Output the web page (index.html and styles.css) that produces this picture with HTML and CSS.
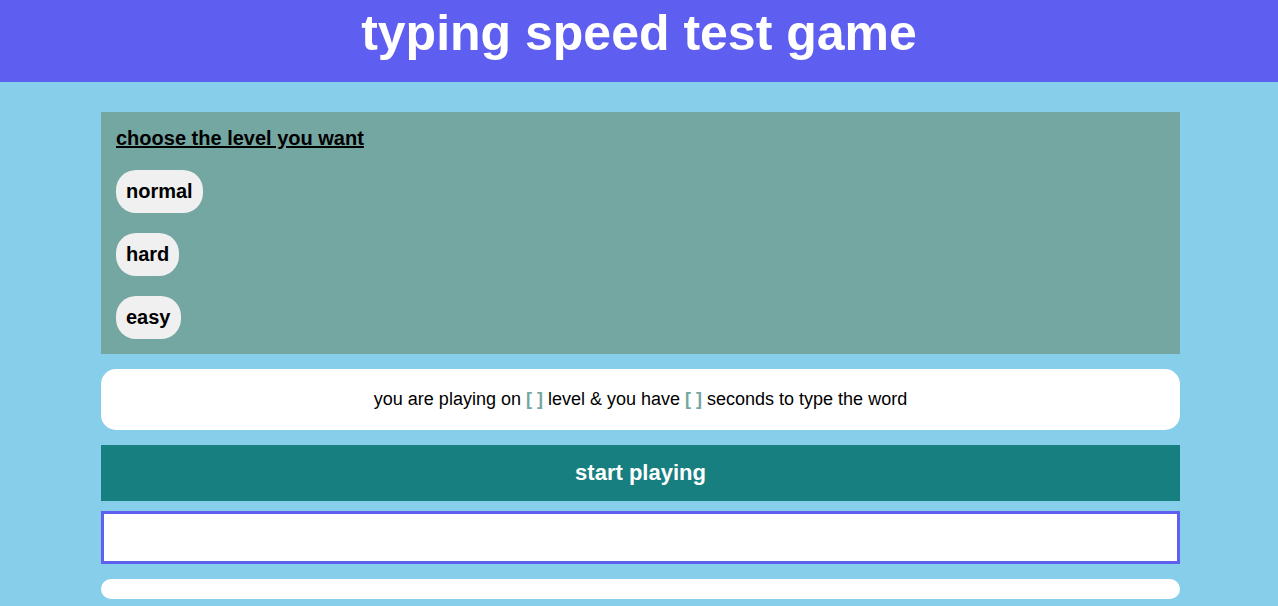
FILE: index.html
```html
<!DOCTYPE html>
<html lang="en">
<head>
<meta charset="UTF-8">
<title>typing speed test game</title>
<link rel="stylesheet" href="styles.css">
</head>
<body>
<header class="top">
  <h1 class="title">typing speed test game</h1>
</header>
<main class="game">
  <section class="levels">
    <h2 class="levels-title">choose the level you want</h2>
    <button class="level-btn">normal</button>
    <button class="level-btn">hard</button>
    <button class="level-btn">easy</button>
  </section>
  <div class="message">you are playing on <span class="tag">[ ]</span> level &amp; you have <span class="tag">[ ]</span> seconds to type the word</div>
  <div class="start">start playing</div>
  <input class="input" type="text">
  <div class="upcoming"></div>
</main>
</body>
</html>
```
FILE: styles.css
```css
* { box-sizing: border-box; }
html, body {
  margin: 0;
  padding: 0;
  background: #87ceeb;
  font-family: "Liberation Sans", Arial, sans-serif;
  overflow: hidden;
}
.top {
  background: #5e5ff0;
  height: 82px;
  padding-top: 5px;
  text-align: center;
}
.title {
  margin: 0;
  color: #fff;
  font-size: 50px;
  line-height: 56px;
  font-weight: bold;
}
.game {
  margin: 30px 98px 0 101px;
  display: flex;
  flex-direction: column;
}
.levels {
  background: #74a6a2;
  padding: 15px;
  display: flex;
  flex-direction: column;
  align-items: flex-start;
  gap: 20px;
}
.levels-title {
  margin: 0;
  font-size: 20px;
  line-height: 23px;
  font-weight: bold;
  text-decoration: underline;
  color: #000;
}
.level-btn {
  font-family: inherit;
  font-size: 20px;
  line-height: 23px;
  font-weight: bold;
  color: #000;
  background: #f0f0f0;
  border: none;
  border-radius: 20px;
  padding: 10px;
}
.message {
  margin-top: 15px;
  background: #fff;
  border-radius: 15px;
  padding: 20px;
  font-size: 18px;
  line-height: 21px;
  text-align: center;
  color: #000;
}
.tag {
  color: #74a6a2;
  font-weight: bold;
}
.start {
  margin-top: 15px;
  background: #177f80;
  color: #fff;
  height: 56px;
  display: flex;
  align-items: center;
  justify-content: center;
  font-size: 22px;
  font-weight: bold;
}
.input {
  margin-top: 10px;
  height: 53px;
  width: 100%;
  border: 3px solid #6060f0;
  background: #fff;
  outline: none;
  padding: 0 10px;
  font-size: 20px;
}
.upcoming {
  margin-top: 15px;
  height: 20px;
  background: #fff;
  border-radius: 10px;
}
```
